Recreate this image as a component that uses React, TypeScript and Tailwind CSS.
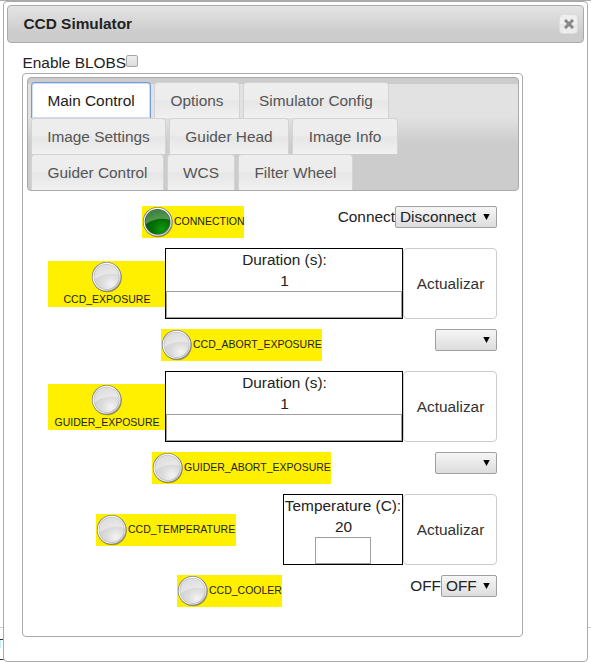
import React from "react";

function Led({ id, on = false }: { id: string; on?: boolean }) {
  return (
    <svg className="block h-8 w-8 shrink-0" viewBox="0 0 32 32">
      <defs>
        <linearGradient id={id + "-ring"} x1="0" y1="0" x2="1" y2="1">
          <stop offset="0" stopColor="#d0d0d0" />
          <stop offset="0.3" stopColor="#ffffff" />
          <stop offset="0.7" stopColor="#f0f0f0" />
          <stop offset="1" stopColor="#b0b0b0" />
        </linearGradient>
        <radialGradient id={id + "-face"} cx="0.68" cy="0.8" r="0.75">
          <stop offset="0" stopColor={on ? "#109a10" : "#f4f4f4"} />
          <stop offset="0.5" stopColor={on ? "#057005" : "#dcdcdc"} />
          <stop offset="1" stopColor={on ? "#035a03" : "#d0d0d0"} />
        </radialGradient>
        <linearGradient id={id + "-gloss"} x1="0" y1="0" x2="0.35" y2="1">
          <stop offset="0" stopColor="#ffffff" stopOpacity={on ? 0.22 : 0.3} />
          <stop offset="1" stopColor="#ffffff" stopOpacity={on ? 0.34 : 0.42} />
        </linearGradient>
      </defs>
      <circle cx="16.2" cy="16.6" r="14.6" fill="#5d5a38" opacity="0.6" />
      <circle cx="15.6" cy="15.8" r="14.8" fill="#858585" />
      <circle cx="15.6" cy="15.8" r="14" fill={"url(#" + id + "-ring)"} />
      <circle cx="15.6" cy="15.8" r="12.9" fill={on ? "#4c6b4c" : "#b6b6b6"} />
      <circle cx="15.6" cy="15.8" r="12.3" fill={"url(#" + id + "-face)"} />
      <path d="M3.5 18.600C2.600 10 7.600 3.500 15.600 3.500c6.500 0 11.300 4.400 12.100 10.300C20.500 11.500 10 13 3.500 18.600Z" fill={"url(#" + id + "-gloss)"} />
    </svg>
  );
}

function Inline({ text, on, box }: { text: string; on?: boolean; box: string }) {
  return (
    <div className={"flex h-8 shrink-0 items-center bg-[#fff000] text-[10.5px] leading-8 whitespace-nowrap " + box}>
      <Led id={text} on={on} />
      <span className="-mt-0.5">{text}</span>
    </div>
  );
}

function Stacked({ text }: { text: string }) {
  return (
    <div className="mt-[13px] ml-[25px] flex h-[46px] w-[117px] shrink-0 flex-col items-center bg-[#fff000] pl-px text-[10.5px]">
      <Led id={text} />
      <span className="leading-[12px]">{text}</span>
    </div>
  );
}

function Choice({ text, box }: { text: string; box: string }) {
  return (
    <button className={"flex h-[22px] shrink-0 items-center justify-between rounded-[2px] border border-[#a0a0a0] bg-linear-to-b from-[#f6f6f6] to-[#dddddd] pr-1.5 pl-1 leading-5 whitespace-nowrap " + box}>
      <span>{text}</span>
      <svg className="-mt-px h-1.5 w-[7px]" viewBox="0 0 7 6"><path d="M.3 0h6.400L3.500 6Z" fill="#000" /></svg>
    </button>
  );
}

function Update() {
  return (
    <button className="h-[71px] w-[94px] shrink-0 rounded border border-[#cccccc] bg-white pl-px text-[#333333]">Actualizar</button>
  );
}

function Exposure({ text }: { text: string }) {
  return (
    <div className="mb-2.5 flex h-[71px]">
      <Stacked text={text} />
      <div className="flex h-[71px] w-[238px] shrink-0 flex-col border border-black text-center leading-[21px]">
        <div className="pl-px">Duration (s):</div>
        <div className="pl-px">1</div>
        <input className="h-[27px] w-full border border-[#a0a0a0]" />
      </div>
      <Update />
    </div>
  );
}

function Tab({ text, box, active = false }: { text: string; box: string; active?: boolean }) {
  return (
    <button
      className={
        "mr-[3px] h-9 shrink-0 rounded-t border border-b-0 text-center leading-[36px] whitespace-nowrap " +
        box +
        (active
          ? " border-[#7199dc] bg-white text-[#212121] shadow-[inset_0_0_0_1px_#cfddf5,inset_0_-1px_0_0_#7199dc]"
          : " border-[#d3d3d3] bg-[linear-gradient(#eeeeee_0,#ececec_17px,#e6e6e6_18px,#f1f1f1_35px)] text-[#555555]")
      }
    >
      {text}
    </button>
  );
}

export default function App() {
  return (
    <div className="relative h-[662px] w-[591px] overflow-hidden bg-white font-['Liberation_Sans',Arial,sans-serif] text-[15.4px] text-[#222222]">
      <div className="absolute inset-x-0 top-0 h-px bg-[#aaaaaa]" />
      <div className="absolute inset-x-0 top-[627px] h-px bg-[#cccccc]" />
      <div className="absolute top-[639px] left-0 h-[21px] w-4 border-y border-[#333333]">
        <div className="h-2 w-px bg-[#bdf4fa]" />
      </div>

      <div className="relative ml-[3px] h-[661px] w-[585px] translate-y-px rounded border border-[#aaaaaa] bg-white p-[3px]">
        <header className="flex h-[38px] w-[577px] items-center justify-between rounded border border-[#aaaaaa] bg-[linear-gradient(#e4e4e4_0,#cccccc_27px)] pr-[5px] pl-[15.5px] font-bold">
          <span>CCD Simulator</span>
          <button className="flex h-5 w-[19px] items-center justify-center rounded border border-[#dddddd] bg-[linear-gradient(#eeeeee_50%,#e6e6e6_50%,#eeeeee)]">
            <svg className="h-[10px] w-[10px]" viewBox="0 0 10 10"><path d="m2 2 6 6M8 2 2 8" stroke="#888" strokeWidth="3" strokeLinecap="square" /></svg>
          </button>
        </header>

        <div className="mt-3 ml-[15.5px] flex h-[18px] leading-4">
          <label className="w-[103.5px] whitespace-nowrap">Enable BLOBS</label>
          <span className="h-3 w-3 rounded-[2px] border border-[#a6a6a6] bg-linear-to-b from-[#eeeeee] to-[#dcdcdc]" />
        </div>

        <main className="ml-[15px] h-[564px] w-[501px] rounded border border-[#aaaaaa] bg-white py-[3px]">
          <nav className="ml-1 h-[114px] w-[492px] rounded border border-[#aaaaaa] bg-[linear-gradient(#cccccc_0,#cccccc_6px,#e2e2e2_6px,#e2e2e2_38px,#cccccc_66px)] pt-1 pl-[3px]">
            <div className="flex">
              <Tab text="Main Control" box="w-[120px]" active />
              <Tab text="Options" box="w-[86px]" />
              <Tab text="Simulator Config" box="w-[146px]" />
            </div>
            <div className="flex">
              <Tab text="Image Settings" box="w-[135px]" />
              <Tab text="Guider Head" box="w-[120px]" />
              <Tab text="Image Info" box="w-[106px]" />
            </div>
            <div className="flex">
              <Tab text="Guider Control" box="w-[133px]" />
              <Tab text="WCS" box="w-[68px]" />
              <Tab text="Filter Wheel" box="w-[115px]" />
            </div>
          </nav>

          <section className="w-[474px] pt-[15px]">
            <div className="mb-2.5 flex h-8 items-start">
              <Inline text="CONNECTION" on box="ml-[119px] w-[102px]" />
              <span className="ml-auto leading-[22px]">Connect</span>
              <Choice text="Disconnect" box="w-[102px]" />
            </div>
            <Exposure text="CCD_EXPOSURE" />
            <div className="mb-2.5 flex h-8 items-start justify-between">
              <Inline text="CCD_ABORT_EXPOSURE" box="ml-[138px] w-[161px]" />
              <Choice text="" box="w-[62px]" />
            </div>
            <Exposure text="GUIDER_EXPOSURE" />
            <div className="mb-2.5 flex h-8 items-start justify-between">
              <Inline text="GUIDER_ABORT_EXPOSURE" box="ml-[129px] w-[179px]" />
              <Choice text="" box="w-[62px]" />
            </div>
            <div className="mb-2.5 flex h-[71px]">
              <Inline text="CCD_TEMPERATURE" box="ml-[73px] mt-[20px] w-[140px]" />
              <div className="ml-auto flex h-[71px] w-[120px] shrink-0 flex-col items-center border border-black leading-[21px] whitespace-nowrap">
                <div>Temperature (C):</div>
                <div className="pl-px">20</div>
                <input className="h-[27px] w-14 border border-[#a0a0a0]" />
              </div>
              <Update />
            </div>
            <div className="flex h-8 items-start">
              <Inline text="CCD_COOLER" box="ml-[154px] w-[105px]" />
              <span className="ml-auto leading-[22px]">OFF</span>
              <Choice text="OFF" box="w-14" />
            </div>
          </section>
        </main>
      </div>
    </div>
  );
}
